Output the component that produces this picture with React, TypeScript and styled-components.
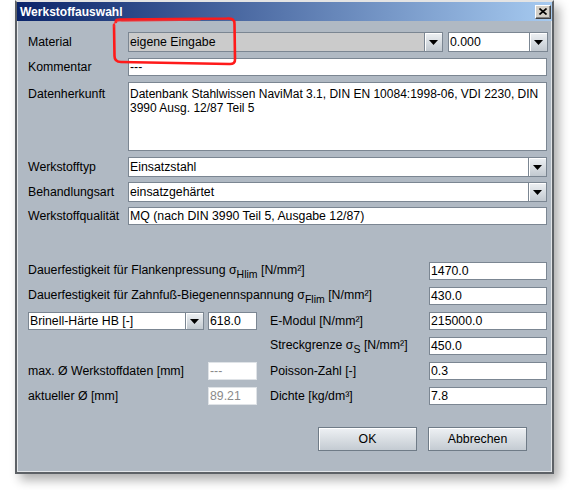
import React from "react";
import styled, { createGlobalStyle } from "styled-components";

const Global = createGlobalStyle`
  html, body { margin: 0; padding: 0; background: #ffffff; }
  body { font-family: "Liberation Sans", Arial, sans-serif; font-size: 12.3px; color: #000; }
`;

const Page = styled.div`
  position: relative;
  width: 570px;
  height: 490px;
  overflow: hidden;
  padding-left: 15px;
  box-sizing: border-box;
`;

const Window = styled.div`
  width: 539px;
  height: 474px;
  box-sizing: border-box;
  border: 2px solid #5d6166;
  border-top: 2px solid #e4e4e4;
  box-shadow: 5px 6px 10px rgba(0, 0, 0, 0.32);
  background: #b0b9c3;
  display: flex;
  flex-direction: column;
`;

const TitleBar = styled.div`
  height: 19px;
  flex: none;
  background: linear-gradient(to right, #0a246a, #a6caf0);
  display: flex;
  align-items: center;
  justify-content: space-between;
  padding: 0 1px 0 3px;
`;

const Title = styled.span`
  color: #fff;
  font-weight: bold;
  font-size: 12px;
`;

const CloseBtn = styled.div`
  width: 16px;
  height: 14px;
  box-sizing: border-box;
  background: #d4d0c8;
  border: 1px solid;
  border-color: #ffffff #404040 #404040 #ffffff;
  box-shadow: inset -1px -1px 0 #808080;
  display: flex;
  align-items: center;
  justify-content: center;
`;

const Body = styled.div`
  flex: 1;
  border: 1px solid #e2e5e8;
  border-top: none;
  padding: 11px 2px 0 10px;
  display: flex;
  flex-direction: column;
`;

const Row = styled.div<{ $gap: number; $h: number }>`
  display: flex;
  margin-top: ${(p) => p.$gap}px;
  height: ${(p) => p.$h}px;
  align-items: center;
`;

const Label = styled.div<{ $top?: boolean }>`
  width: 100px;
  flex: none;
  white-space: nowrap;
  align-self: ${(p) => (p.$top ? "flex-start" : "center")};
  padding-top: ${(p) => (p.$top ? "5px" : "0")};
  line-height: 14px;
`;

const Field = styled.div<{ $w?: number; $disabled?: boolean }>`
  width: ${(p) => (p.$w ? `${p.$w}px` : "419px")};
  height: 100%;
  box-sizing: border-box;
  border: 1px solid ${(p) => (p.$disabled ? "#dfe3e7" : "#7b8692")};
  background: #fff;
  color: ${(p) => (p.$disabled ? "#8a8a8a" : "#000")};
  padding-left: 1px;
  display: flex;
  align-items: center;
  white-space: nowrap;
  overflow: hidden;
`;

const TextArea = styled.div`
  width: 419px;
  height: 100%;
  box-sizing: border-box;
  border: 1px solid #7b8692;
  background: #fff;
  padding: 4px 0 0 1px;
  font-size: 12px;
  line-height: 14px;
  white-space: nowrap;
  overflow: hidden;
`;

const Combo = styled.div<{ $w: number; $bg?: string }>`
  width: ${(p) => p.$w}px;
  height: 100%;
  box-sizing: border-box;
  border: 1px solid #7b8692;
  background: ${(p) => p.$bg || "#fff"};
  display: flex;
  flex: none;
`;

const ComboText = styled.div`
  flex: 1;
  padding-left: 1px;
  display: flex;
  align-items: center;
  white-space: nowrap;
  overflow: hidden;
`;

const ArrowBtn = styled.div`
  width: 18px;
  flex: none;
  box-sizing: border-box;
  border-left: 1px solid #7b8692;
  background: linear-gradient(#eef1f4, #c2c9d0);
  box-shadow: inset 1px 1px 0 #ffffff;
  display: flex;
  align-items: center;
  justify-content: center;
`;

const Spacer = styled.div<{ $w: number }>`
  width: ${(p) => p.$w}px;
  flex: none;
`;

const Lower = styled.div`
  margin-top: 37px;
  display: grid;
  grid-template-columns: 180px 62px 159px 118px;
  grid-auto-rows: 18px;
  row-gap: 7px;
  align-items: center;
`;

const GLabel = styled.div<{ $col: string }>`
  grid-column: ${(p) => p.$col};
  white-space: nowrap;
`;

const Cell = styled.div<{ $col: string }>`
  grid-column: ${(p) => p.$col};
  height: 18px;
  display: flex;
`;

const Sub = styled.span`
  font-size: 10.5px;
  vertical-align: -4px;
`;

const Buttons = styled.div`
  margin-top: 22px;
  margin-right: 22px;
  display: flex;
  justify-content: flex-end;
  gap: 11px;
`;

const Button = styled.div`
  width: 99px;
  height: 24px;
  box-sizing: border-box;
  border: 1px solid #6f7b87;
  background: linear-gradient(#eef1f4, #c4cbd2);
  box-shadow: inset 1px 1px 0 #ffffff;
  display: flex;
  align-items: center;
  justify-content: center;
`;

const Annotation = styled.svg`
  position: absolute;
  left: 0;
  top: 0;
  pointer-events: none;
`;

const Arrow = () => (
  <svg width="9" height="5" viewBox="0 0 9 5">
    <polygon points="0,0 9,0 4.5,5" fill="#000" />
  </svg>
);

export default function App() {
  return (
    <Page>
      <Global />
      <Window>
        <TitleBar>
          <Title>Werkstoffauswahl</Title>
          <CloseBtn>
            <svg width="8" height="7" viewBox="0 0 8 7">
              <path d="M0.5 0.5 L7.5 6.5 M7.5 0.5 L0.5 6.5" stroke="#000" strokeWidth="1.6" />
            </svg>
          </CloseBtn>
        </TitleBar>
        <Body>
          <Row $gap={0} $h={20}>
            <Label>Material</Label>
            <Combo $w={315} $bg="#cbcbcb">
              <ComboText>eigene Eingabe</ComboText>
              <ArrowBtn>
                <Arrow />
              </ArrowBtn>
            </Combo>
            <Spacer $w={5} />
            <Combo $w={100}>
              <ComboText>0.000</ComboText>
              <ArrowBtn>
                <Arrow />
              </ArrowBtn>
            </Combo>
          </Row>
          <Row $gap={6} $h={18}>
            <Label>Kommentar</Label>
            <Field>---</Field>
          </Row>
          <Row $gap={6} $h={69}>
            <Label $top>Datenherkunft</Label>
            <TextArea>
              Datenbank Stahlwissen NaviMat 3.1, DIN EN 10084:1998-06, VDI 2230, DIN
              <br />
              3990 Ausg. 12/87 Teil 5
            </TextArea>
          </Row>
          <Row $gap={6} $h={20}>
            <Label>Werkstofftyp</Label>
            <Combo $w={419}>
              <ComboText>Einsatzstahl</ComboText>
              <ArrowBtn>
                <Arrow />
              </ArrowBtn>
            </Combo>
          </Row>
          <Row $gap={5} $h={20}>
            <Label>Behandlungsart</Label>
            <Combo $w={419}>
              <ComboText>einsatzgehärtet</ComboText>
              <ArrowBtn>
                <Arrow />
              </ArrowBtn>
            </Combo>
          </Row>
          <Row $gap={5} $h={18}>
            <Label>Werkstoffqualität</Label>
            <Field>MQ (nach DIN 3990 Teil 5, Ausgabe 12/87)</Field>
          </Row>

          <Lower>
            <GLabel $col="1 / 4">
              Dauerfestigkeit für Flankenpressung σ<Sub>Hlim</Sub> [N/mm²]
            </GLabel>
            <Cell $col="4">
              <Field $w={118}>1470.0</Field>
            </Cell>

            <GLabel $col="1 / 4">
              Dauerfestigkeit für Zahnfuß-Biegenennspannung σ<Sub>Flim</Sub> [N/mm²]
            </GLabel>
            <Cell $col="4">
              <Field $w={118}>430.0</Field>
            </Cell>

            <Cell $col="1">
              <Combo $w={176}>
                <ComboText>Brinell-Härte HB [-]</ComboText>
                <ArrowBtn>
                  <Arrow />
                </ArrowBtn>
              </Combo>
            </Cell>
            <Cell $col="2">
              <Field $w={49}>618.0</Field>
            </Cell>
            <GLabel $col="3">E-Modul [N/mm²]</GLabel>
            <Cell $col="4">
              <Field $w={118}>215000.0</Field>
            </Cell>

            <GLabel $col="3">
              Streckgrenze σ<Sub>S</Sub> [N/mm²]
            </GLabel>
            <Cell $col="4">
              <Field $w={118}>450.0</Field>
            </Cell>

            <GLabel $col="1">max. Ø Werkstoffdaten [mm]</GLabel>
            <Cell $col="2">
              <Field $w={49} $disabled>
                ---
              </Field>
            </Cell>
            <GLabel $col="3">Poisson-Zahl [-]</GLabel>
            <Cell $col="4">
              <Field $w={118}>0.3</Field>
            </Cell>

            <GLabel $col="1">aktueller Ø [mm]</GLabel>
            <Cell $col="2">
              <Field $w={49} $disabled>
                89.21
              </Field>
            </Cell>
            <GLabel $col="3">Dichte [kg/dm³]</GLabel>
            <Cell $col="4">
              <Field $w={118}>7.8</Field>
            </Cell>
          </Lower>

          <Buttons>
            <Button>OK</Button>
            <Button>Abbrechen</Button>
          </Buttons>
        </Body>
      </Window>
      <Annotation width="570" height="490" viewBox="0 0 570 490">
        <path
          d="M116 22 Q115 19 121 19.5 L227 18.5 Q235 18 234.5 24 L235 59 Q235.5 64.5 229 64 L121 62 Q114.5 62 114.5 56 L114 25"
          fill="none"
          stroke="#ff1a1a"
          strokeWidth="2.6"
          strokeLinecap="round"
        />
        <path
          d="M114 27 Q113 20 122 21 L200 20"
          fill="none"
          stroke="#ff3030"
          strokeWidth="1.4"
          strokeLinecap="round"
          opacity="0.8"
        />
      </Annotation>
    </Page>
  );
}
